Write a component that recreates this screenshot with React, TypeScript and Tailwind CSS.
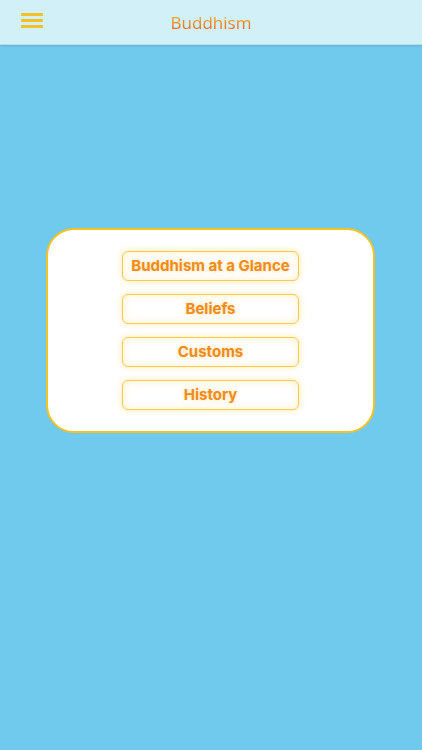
import React from "react";

export default function App() {
  const items = ["Buddhism at a Glance", "Beliefs", "Customs", "History"];
  return (
    <div className="w-[422px] h-[750px] bg-[#70caed] flex flex-col overflow-hidden">
      <div className="h-[45px] shrink-0 bg-[#d1f0f8] border-b border-[#b6dce8] shadow-[0_1px_2px_rgba(0,0,0,0.12)] relative flex items-center justify-center">
        <div className="absolute left-[21px] top-[13px] w-[22px] flex flex-col gap-[3px]">
          <div className="h-[3px] bg-[#f4c025] rounded-[1px]" />
          <div className="h-[3px] bg-[#f4c025] rounded-[1px]" />
          <div className="h-[3px] bg-[#f4c025] rounded-[1px]" />
        </div>
        <span
          className="text-[17px] leading-[20px] bg-gradient-to-b from-[#f6b520] to-[#eb4f1b] bg-clip-text text-transparent mt-[1px]"
          style={{ fontFamily: '"Open Sans", sans-serif', fontWeight: 400 }}
        >
          Buddhism
        </span>
      </div>
      <div className="flex-1 flex items-start justify-center pt-[183px]">
        <div className="w-[329px] bg-white border-2 border-[#f3c323] rounded-[28px] pt-[21px] pb-[21px] flex flex-col items-center gap-[13px] mr-[1px]">
          {items.map((t) => (
            <div
              key={t}
              className="w-[177px] h-[30px] rounded-[6px] border-[1.5px] border-[#f6cc4e] bg-white shadow-[0_0_6px_rgba(250,200,60,0.45),inset_0_0_8px_rgba(250,210,90,0.35)] flex items-center justify-center"
            >
              <span
                className="text-[15px] font-bold text-[#f08b1c] [text-shadow:0_0_4px_rgba(250,200,80,0.6)]"
                style={{ fontFamily: 'Inter, "Noto Sans", sans-serif' }}
              >
                {t}
              </span>
            </div>
          ))}
        </div>
      </div>
    </div>
  );
}
